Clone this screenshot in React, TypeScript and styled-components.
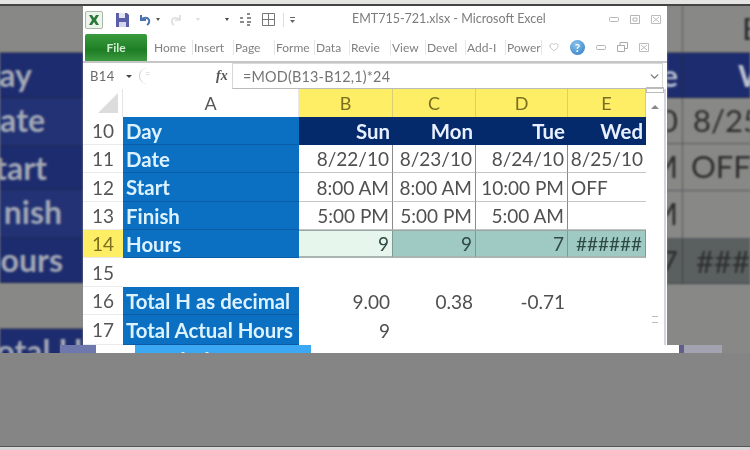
import React from 'react';
import styled, { createGlobalStyle } from 'styled-components';
import { ChevronDown, Heart } from 'lucide-react';

const GlobalStyle = createGlobalStyle`
  html, body { margin: 0; padding: 0; background: #858585; }
  body { width: 750px; height: 450px; overflow: hidden; font-family: Lato, "Open Sans", sans-serif; }
`;

const Page = styled.div`
  width: 750px;
  height: 450px;
  display: flex;
  flex-direction: column;
  overflow: hidden;
`;

const TopStrip = styled.div`
  height: 4px;
  background: #e4e4e2;
  border-bottom: 2px solid #444;
  flex: none;
`;

const Stage = styled.div`
  position: relative;
  height: 347px;
  flex: none;
  overflow: hidden;
`;

const BottomPanel = styled.div`
  flex: 1;
  background: #858585;
  border-bottom: 3px solid #d8d8d8;
  box-shadow: inset 0 -1px 0 #555;
`;

/* blown up copy of the sheet behind the window */
const Backdrop = styled.div`
  height: 100%;
  display: flex;
  justify-content: space-between;
  filter: blur(1px);
`;

const BackColumn = styled.div`
  width: 83px;
  display: flex;
  flex-direction: column;
  flex: none;
`;

const BackRow = styled.div<{ $h: number; $tone: 'gray' | 'navy' | 'slate' | 'dark' }>`
  height: ${(p) => p.$h}px;
  flex: none;
  display: flex;
  overflow: hidden;
  border-bottom: 1px solid rgba(30, 30, 50, 0.45);
  background: ${(p) =>
    ({
      gray: 'repeating-conic-gradient(#90908e 0 25%, #7e7e7c 0 50%) 0 0 / 3px 3px',
      navy: '#1d2c6e',
      slate: '#223274',
      dark: '#5a605f',
    })[p.$tone]};
`;

const BackLabel = styled.div<{ $right: number }>`
  flex: 1;
  text-align: right;
  padding-right: ${(p) => p.$right}px;
  white-space: nowrap;
  overflow: hidden;
  direction: rtl;
  font-size: 32px;
  line-height: 44px;
  font-weight: 700;
  color: #a4a9b6;
`;

const BackEdge = styled.div<{ $light?: boolean }>`
  width: 16px;
  flex: none;
  overflow: hidden;
  direction: rtl;
  white-space: nowrap;
  padding-right: 4px;
  box-sizing: border-box;
  font-size: 31px;
  line-height: 44px;
  font-weight: ${(p) => (p.$light ? 700 : 400)};
  color: ${(p) => (p.$light ? '#b9bfd0' : '#2e2e30')};
  border-right: 1px solid rgba(40, 40, 40, 0.5);
`;

const BackCell = styled.div<{ $pad: number; $light?: boolean }>`
  flex: 1;
  overflow: hidden;
  white-space: nowrap;
  font-size: 31px;
  line-height: 44px;
  padding-left: ${(p) => p.$pad}px;
  font-weight: ${(p) => (p.$light ? 700 : 400)};
  color: ${(p) => (p.$light ? '#b9bfd0' : '#2e2e30')};
`;

const Window = styled.div`
  position: absolute;
  left: 83px;
  top: 0;
  width: 584px;
  height: 339px;
  background: #fff;
  display: flex;
  flex-direction: column;
  overflow: hidden;
  filter: blur(0.45px);
`;

const TitleBar = styled.div`
  height: 27px;
  flex: none;
  display: flex;
  align-items: center;
  padding: 0 0 0 2px;
  position: relative;
`;

const AppIcon = styled.div`
  width: 16px;
  height: 16px;
  border: 1px solid #a9b9a9;
  border-radius: 2px;
  background: #eef4ec;
  margin-right: 13px;
  display: flex;
  align-items: center;
  justify-content: center;
`;

const QuickIcon = styled.svg<{ $gap?: number }>`
  flex: none;
  margin-right: ${(p) => p.$gap ?? 8}px;
`;

const Title = styled.div`
  position: absolute;
  left: 269px;
  top: 4px;
  font-size: 12.5px;
  line-height: 18px;
  color: #7c7c7c;
  white-space: nowrap;
`;

const Controls = styled.div`
  margin-left: auto;
  display: flex;
  align-items: center;
  gap: 11px;
  padding-right: 6px;
  color: #a5a5a5;
`;

const RibbonTabs = styled.div`
  height: 28px;
  flex: none;
  display: flex;
  align-items: center;
  border-bottom: 2px solid #c6c6c6;
`;

const FileTab = styled.div`
  width: 62px;
  height: 27px;
  margin: 0 6px 0 2px;
  flex: none;
  border-radius: 2px 2px 0 0;
  background: linear-gradient(#3a9a3e, #1e7e24 60%, #3d9a42);
  color: #d4ecd4;
  font-size: 12px;
  font-weight: 700;
  display: flex;
  align-items: center;
  justify-content: center;
`;

const Tab = styled.div<{ $w: number }>`
  width: ${(p) => p.$w}px;
  flex: none;
  height: 15px;
  line-height: 15px;
  padding-left: 1px;
  box-sizing: border-box;
  overflow: hidden;
  white-space: nowrap;
  font-size: 12px;
  color: #808080;
  border-right: 1px solid #e6e6e6;
`;

const RibbonRight = styled.div`
  display: flex;
  align-items: center;
  gap: 11px;
  margin-left: 7px;
  color: #a8a8a8;
`;

const Help = styled.div`
  width: 15px;
  height: 15px;
  border-radius: 50%;
  background: radial-gradient(circle at 40% 30%, #8cc4ee, #2a78c0);
  color: #fff;
  font-size: 11px;
  font-weight: 700;
  line-height: 15px;
  text-align: center;
  flex: none;
`;

const FormulaBar = styled.div`
  height: 26px;
  flex: none;
  display: flex;
  align-items: center;
  padding-left: 7px;
  color: #666;
`;

const NameBox = styled.div`
  width: 33px;
  font-size: 13px;
  color: #6a6a6a;
  flex: none;
  letter-spacing: 0.4px;
`;

const NameArrow = styled.div`
  width: 0;
  height: 0;
  border-left: 3px solid transparent;
  border-right: 3px solid transparent;
  border-top: 3px solid #444;
  margin: 0 7px 0 3px;
  flex: none;
`;

const Oval = styled.div`
  width: 77px;
  height: 16px;
  border-left: 1px solid #ccc;
  border-radius: 8px 0 0 8px;
  flex: none;
  color: #ccc;
  font-size: 9px;
  padding-left: 5px;
  box-sizing: border-box;
`;

const Fx = styled.div`
  width: 16px;
  flex: none;
  font-family: 'Liberation Serif', serif;
  font-style: italic;
  font-weight: 700;
  font-size: 14px;
  color: #555;
`;

const FormulaInput = styled.div`
  flex: 1;
  align-self: stretch;
  margin-right: 4px;
  border: 1px solid #d8d8d8;
  border-bottom-color: #bbb;
  display: flex;
  align-items: center;
  justify-content: space-between;
  padding: 0 1px 0 10px;
  font-size: 14.4px;
  color: #747474;
  letter-spacing: 0.2px;
`;

const SheetArea = styled.div`
  flex: 1;
  display: flex;
  min-height: 0;
`;

const Sheet = styled.div`
  width: 563px;
  display: grid;
  grid-template-columns: 40px 176px 94px 83px 92px 78px;
  grid-template-rows: 28px 28px 28px 29px 28px 28px 29px 28px 30px;
  font-size: 19px;
  color: #505050;
`;

const Cell = styled.div`
  display: flex;
  align-items: center;
  box-sizing: border-box;
  white-space: nowrap;
  overflow: hidden;
`;

const Corner = styled(Cell)`
  background: #fff;
  border-right: 1px solid #e4e4e4;
  justify-content: flex-end;
  align-items: flex-end;
  padding: 0 4px 4px 0;
`;

const ColHead = styled(Cell)<{ $active?: boolean }>`
  justify-content: center;
  background: ${(p) => (p.$active ? '#fdee66' : '#fff')};
  color: ${(p) => (p.$active ? '#7a6e20' : '#555')};
  border-right: 1px solid ${(p) => (p.$active ? '#d9cf70' : '#e8e8e8')};
  font-size: 18px;
`;

const RowHead = styled(Cell)<{ $active?: boolean }>`
  justify-content: center;
  background: ${(p) => (p.$active ? '#fdee66' : '#fff')};
  color: ${(p) => (p.$active ? '#7a6e20' : '#555')};
  border-bottom: 1px solid #eaeaea;
  font-size: 19px;
`;

const Label = styled(Cell)`
  background: #0b6fc2;
  color: #dcf3ff;
  font-size: 20.4px;
  font-weight: 700;
  padding-left: 3px;
  border-bottom: 1px solid #0a5da6;
`;

const DayHead = styled(Cell)`
  background: #052a6c;
  color: #e8f0ff;
  font-size: 20.4px;
  font-weight: 700;
  justify-content: flex-end;
  padding-right: 3px;
`;

const Value = styled(Cell)<{ $left?: boolean; $last?: boolean }>`
  justify-content: ${(p) => (p.$left ? 'flex-start' : 'flex-end')};
  padding: ${(p) => (p.$left ? '0 0 0 3px' : '0 3px 0 0')};
  border-right: ${(p) => (p.$last ? 'none' : '1px solid #8a8a8a')};
  border-bottom: 1px solid #c4c4c4;
`;

const HoursCell = styled(Cell)<{ $first?: boolean }>`
  justify-content: flex-end;
  padding-right: 3px;
  color: #2f4a45;
  background: ${(p) => (p.$first ? '#e6f6ec' : '#9fc9c3')};
  border-top: 1px solid #9aa8a4;
  border-bottom: 2px solid #a9b5b2;
  border-right: 1px solid #7f9a96;
`;

const Plain = styled(Cell)`
  justify-content: flex-end;
  padding-right: 3px;
`;

const ScrollBar = styled.div`
  flex: 1;
  display: flex;
  flex-direction: column;
  align-items: center;
  margin-right: 2px;
  border-right: 2px solid #d5d5e2;
`;

const SplitHandle = styled.div`
  width: 16px;
  height: 4px;
  margin-top: -2px;
  border: 1px solid #bbb;
`;

const ArrowUp = styled.div`
  width: 0;
  height: 0;
  margin-top: 12px;
  border-left: 4px solid transparent;
  border-right: 4px solid transparent;
  border-bottom: 4px solid #888;
`;

const Grip = styled.div`
  width: 6px;
  height: 5px;
  margin-top: 207px;
  border-top: 1px solid #bbb;
  border-bottom: 1px solid #bbb;
`;

/* the next row, shifted sideways like the glitch in the photo */
const GhostRow = styled.div`
  position: absolute;
  left: 60px;
  top: 339px;
  height: 8px;
  display: flex;
  overflow: hidden;
  font-size: 21px;
`;

const GhostEdge = styled.div<{ $w: number; $color: string }>`
  width: ${(p) => p.$w}px;
  flex: none;
  background: ${(p) => p.$color};
`;

const GhostHead = styled.div`
  width: 39px;
  flex: none;
  background: #fff;
  color: #777;
  text-align: center;
  line-height: 28px;
  font-size: 18px;
`;

const GhostLabel = styled.div`
  width: 176px;
  flex: none;
  background: #3ca8f4;
  color: #e8f6ff;
  font-weight: 700;
  padding-left: 3px;
  box-sizing: border-box;
  line-height: 30px;
  letter-spacing: 0.5px;
  white-space: pre;
`;

const GhostRest = styled.div`
  width: 368px;
  flex: none;
  background: #fff;
`;

type Row = { n: number; label: string; vals: string[] };

const rows: Row[] = [
  { n: 11, label: 'Date', vals: ['8/22/10', '8/23/10', '8/24/10', '8/25/10'] },
  { n: 12, label: 'Start', vals: ['8:00 AM', '8:00 AM', '10:00 PM', 'OFF'] },
  { n: 13, label: 'Finish', vals: ['5:00 PM', '5:00 PM', '5:00 AM', ''] },
];

const App: React.FC = () => {
  return (
    <Page>
      <GlobalStyle />
      <TopStrip />
      <Stage>
        <Backdrop>
          <BackColumn>
            <BackRow $h={46} $tone="gray" />
            <BackRow $h={44} $tone="navy"><BackLabel $right={51}>ay</BackLabel></BackRow>
            <BackRow $h={47} $tone="slate"><BackLabel $right={38}>ate</BackLabel></BackRow>
            <BackRow $h={43} $tone="navy"><BackLabel $right={36}>tart</BackLabel></BackRow>
            <BackRow $h={47} $tone="slate"><BackLabel $right={21}>nish</BackLabel></BackRow>
            <BackRow $h={44} $tone="navy"><BackLabel $right={20}>ours</BackLabel></BackRow>
            <BackRow $h={45} $tone="gray" />
            <BackRow $h={31} $tone="navy"><BackLabel $right={0}>otal H</BackLabel></BackRow>
          </BackColumn>
          <BackColumn>
            <BackRow $h={46} $tone="gray">
              <BackEdge />
              <BackCell $pad={59}>E</BackCell>
            </BackRow>
            <BackRow $h={44} $tone="navy">
              <BackEdge $light>e</BackEdge>
              <BackCell $pad={55} $light>W</BackCell>
            </BackRow>
            <BackRow $h={45} $tone="gray">
              <BackEdge>0</BackEdge>
              <BackCell $pad={10}>8/25</BackCell>
            </BackRow>
            <BackRow $h={46} $tone="gray">
              <BackEdge>M</BackEdge>
              <BackCell $pad={8}>OFF</BackCell>
            </BackRow>
            <BackRow $h={47} $tone="gray">
              <BackEdge>M</BackEdge>
              <BackCell $pad={8} />
            </BackRow>
            <BackRow $h={44} $tone="dark">
              <BackEdge>7</BackEdge>
              <BackCell $pad={13}>###</BackCell>
            </BackRow>
            <BackRow $h={75} $tone="gray" />
          </BackColumn>
        </Backdrop>

        <Window>
          <TitleBar>
            <AppIcon>
              <svg width="12" height="12" viewBox="0 0 12 12">
                <path d="M1 1h3l2 3 2-3h3L8 6l3 5H8L6 8l-2 3H1l3-5z" fill="#2a7a3a" />
              </svg>
            </AppIcon>
            <QuickIcon width="13" height="14" viewBox="0 0 13 14" $gap={10}>
              <path d="M0 0h11l2 2v12H0z" fill="#5a5fa8" />
              <path d="M3 0h6v5H3z" fill="#e4e6f2" />
              <path d="M3 9h7v5H3z" fill="#d4d6ec" />
            </QuickIcon>
            <QuickIcon width="12" height="12" viewBox="0 0 12 12" $gap={5}>
              <path d="M2 1v5h5M2 6c2-3 7-3 8 0 .6 2-.4 4-2 5" fill="none" stroke="#4a72b0" strokeWidth="2" />
            </QuickIcon>
            <QuickIcon width="4" height="3" viewBox="0 0 4 3" $gap={10}>
              <path d="M0 0h4L2 3z" fill="#555" />
            </QuickIcon>
            <QuickIcon width="12" height="12" viewBox="0 0 12 12" $gap={14}>
              <path d="M10 1v5H5M10 6C8 3 3 3 2 6c-.6 2 .4 4 2 5" fill="none" stroke="#dcdcdc" strokeWidth="1.6" />
            </QuickIcon>
            <QuickIcon width="4" height="3" viewBox="0 0 4 3" $gap={25}>
              <path d="M0 0h4L2 3z" fill="#ddd" />
            </QuickIcon>
            <QuickIcon width="4" height="3" viewBox="0 0 4 3" $gap={10}>
              <path d="M0 0h4L2 3z" fill="#444" />
            </QuickIcon>
            <QuickIcon width="13" height="13" viewBox="0 0 13 13" $gap={10}>
              <path d="M1 5h3M1 9h4M8 1h3M8 5h4M8 9h4M8 12h3" stroke="#666" strokeWidth="1.5" fill="none" />
            </QuickIcon>
            <QuickIcon width="13" height="13" viewBox="0 0 13 13" $gap={8}>
              <path d="M.5.5h12v12H.5zM6.5.5v12M.5 6.5h12" stroke="#777" fill="none" />
            </QuickIcon>
            <QuickIcon width="1" height="14" viewBox="0 0 1 14" $gap={6}>
              <path d="M0 0h1v14H0z" fill="#ddd" />
            </QuickIcon>
            <QuickIcon width="5" height="6" viewBox="0 0 5 6" $gap={0}>
              <path d="M0 0h5v1H0zM0 3h5L2.5 6z" fill="#666" />
            </QuickIcon>
            <Title>EMT715-721.xlsx  -  Microsoft Excel</Title>
            <Controls>
              <svg width="10" height="5" viewBox="0 0 10 5"><rect x=".5" y=".5" width="9" height="4" rx="1" fill="none" stroke="#b5b5b5" /></svg>
              <svg width="10" height="9" viewBox="0 0 10 9"><path d="M.5.5h9v8h-9zM3 3h4v3H3z" fill="none" stroke="#b5b5b5" /></svg>
              <svg width="10" height="9" viewBox="0 0 10 9"><path d="M.5.5h9v8h-9zM2 2l6 5M8 2L2 7" fill="none" stroke="#bcbcbc" /></svg>
            </Controls>
          </TitleBar>

          <RibbonTabs>
            <FileTab>File</FileTab>
            <Tab $w={40}>Home</Tab>
            <Tab $w={41}>Insert</Tab>
            <Tab $w={41}>Page</Tab>
            <Tab $w={40}>Forme</Tab>
            <Tab $w={35}>Data</Tab>
            <Tab $w={41}>Revie</Tab>
            <Tab $w={35}>View</Tab>
            <Tab $w={40}>Devel</Tab>
            <Tab $w={40}>Add-I</Tab>
            <Tab $w={36}>Power</Tab>
            <RibbonRight>
              <Heart size={10} strokeWidth={1.5} />
              <Help>?</Help>
              <svg width="10" height="5" viewBox="0 0 10 5"><rect x=".5" y=".5" width="9" height="4" rx="1" fill="none" stroke="#b5b5b5" /></svg>
              <svg width="11" height="10" viewBox="0 0 11 10"><path d="M.5 3.5h7v6h-7zM3 3V.5h7.5v6H8" fill="none" stroke="#aaa" /></svg>
              <svg width="10" height="9" viewBox="0 0 10 9"><path d="M.5.5h9v8h-9zM2 2l6 5M8 2L2 7" fill="none" stroke="#bcbcbc" /></svg>
            </RibbonRight>
          </RibbonTabs>

          <FormulaBar>
            <NameBox>B14</NameBox>
            <NameArrow />
            <Oval>=</Oval>
            <Fx>fx</Fx>
            <FormulaInput>
              =MOD(B13-B12,1)*24
              <ChevronDown size={13} strokeWidth={2.5} color="#777" />
            </FormulaInput>
          </FormulaBar>

          <SheetArea>
            <Sheet>
              <Corner>
                <svg width="20" height="20" viewBox="0 0 20 20"><path d="M20 0v20H0z" fill="#dcdcdc" /></svg>
              </Corner>
              <ColHead>A</ColHead>
              <ColHead $active>B</ColHead>
              <ColHead $active>C</ColHead>
              <ColHead $active>D</ColHead>
              <ColHead $active>E</ColHead>

              <RowHead>10</RowHead>
              <Label>Day</Label>
              <DayHead>Sun</DayHead>
              <DayHead>Mon</DayHead>
              <DayHead>Tue</DayHead>
              <DayHead>Wed</DayHead>

              {rows.map((r) => (
                <React.Fragment key={r.n}>
                  <RowHead>{r.n}</RowHead>
                  <Label>{r.label}</Label>
                  {r.vals.map((v, i) => (
                    <Value key={i} $left={v === 'OFF'} $last={i === 3}>{v}</Value>
                  ))}
                </React.Fragment>
              ))}

              <RowHead $active>14</RowHead>
              <Label>Hours</Label>
              <HoursCell $first>9</HoursCell>
              <HoursCell>9</HoursCell>
              <HoursCell>7</HoursCell>
              <HoursCell>######</HoursCell>

              <RowHead>15</RowHead>
              <Plain />
              <Plain />
              <Plain />
              <Plain />
              <Plain />

              <RowHead>16</RowHead>
              <Label>Total H as decimal</Label>
              <Plain>9.00</Plain>
              <Plain>0.38</Plain>
              <Plain>-0.71</Plain>
              <Plain />

              <RowHead>17</RowHead>
              <Label>Total Actual Hours</Label>
              <Plain>9</Plain>
              <Plain />
              <Plain />
              <Plain />
            </Sheet>
            <ScrollBar>
              <SplitHandle />
              <ArrowUp />
              <Grip />
            </ScrollBar>
          </SheetArea>
        </Window>

        <GhostRow>
          <GhostEdge $w={36} $color="#6f78ac" />
          <GhostHead>18</GhostHead>
          <GhostLabel>Work day ?</GhostLabel>
          <GhostRest />
          <GhostEdge $w={5} $color="#5f5f8a" />
          <GhostEdge $w={38} $color="#a3a2b0" />
        </GhostRow>
      </Stage>
      <BottomPanel />
    </Page>
  );
};

export default App;
